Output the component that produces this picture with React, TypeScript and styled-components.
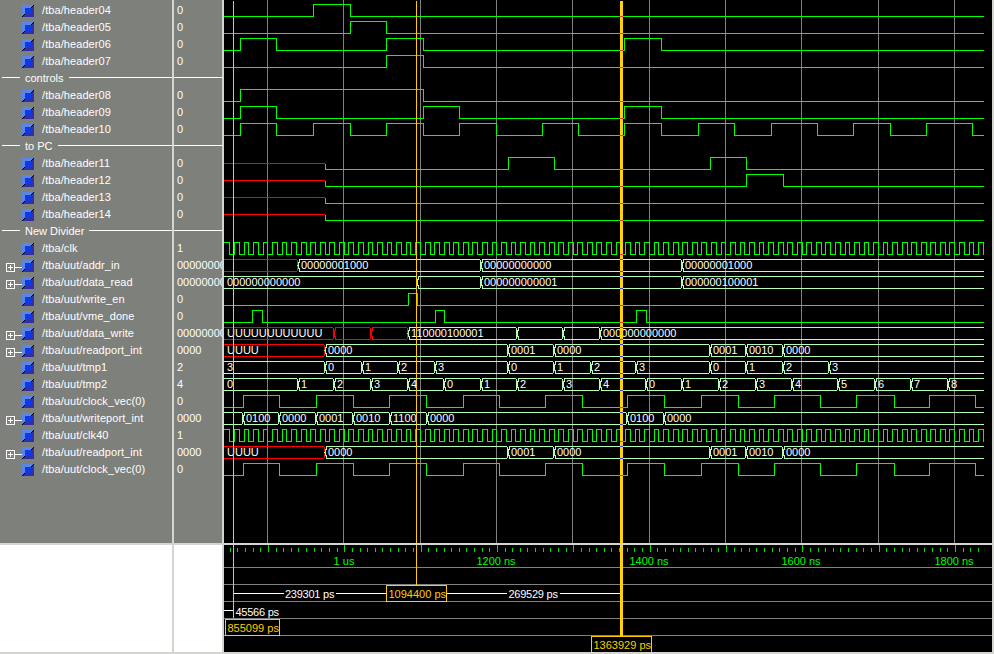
import { createGlobalStyle, styled } from 'styled-components';

const GlobalStyle = createGlobalStyle`
  html, body {
    margin: 0;
    padding: 0;
    background: #d4d4d0;
  }
  #root {
    width: 994px;
    height: 654px;
    overflow: hidden;
  }
`;

const FONT = `'Liberation Sans', Arial, sans-serif`;

const Window = styled.div`
  width: 994px;
  height: 654px;
  display: flex;
  flex-direction: column;
  background: #d4d4d0;
  font-family: ${FONT};
  font-size: 11px;
`;

const Pane = styled.div<{ $height: number }>`
  display: flex;
  height: ${(p) => p.$height}px;
  gap: 2px;
  padding-right: 2px;
`;

const LowerPane = styled(Pane)`
  margin-top: 2px;
`;

const Column = styled.div<{ $width: number; $blank?: boolean }>`
  width: ${(p) => p.$width}px;
  flex: none;
  padding-top: 2px;
  box-sizing: border-box;
  overflow: hidden;
  background: ${(p) => (p.$blank ? '#ffffff' : '#7e807c')};
  color: #ffffff;
`;

const Row = styled.div`
  display: flex;
  align-items: center;
  height: 17px;
  white-space: nowrap;
`;

const NameRow = styled(Row)`
  padding-left: 6px;
`;

const Expander = styled.span`
  position: relative;
  flex: none;
  box-sizing: border-box;
  width: 9px;
  height: 9px;
  margin-top: 4px;
  margin-right: 7px;
  border: 1px solid #ffffff;
  display: flex;
  align-items: center;
  justify-content: center;

  &::before {
    content: '';
    width: 5px;
    height: 1px;
    background: #ffffff;
  }
  &::after {
    content: '';
    position: absolute;
    left: 3px;
    top: 1px;
    width: 1px;
    height: 5px;
    background: #ffffff;
  }
`;

const Connector = styled.span`
  position: absolute;
  left: 8px;
  top: 3px;
  width: 7px;
  height: 1px;
  background: #ffffff;
`;

const NoExpander = styled.span`
  flex: none;
  width: 16px;
`;

const Name = styled.span`
  margin-left: 8px;
  margin-bottom: 2px;
  letter-spacing: 0.08px;
`;

const Value = styled(Row)`
  padding-left: 3px;
  padding-bottom: 2px;
  box-sizing: border-box;
`;

const DividerRow = styled(Row)`
  gap: 5px;
  padding-left: 2px;
  padding-bottom: 2px;
  box-sizing: border-box;
`;

const Rule = styled.span<{ $width?: number }>`
  height: 1px;
  background: #ffffff;
  flex: ${(p) => (p.$width ? `0 0 ${p.$width}px` : '1')};
`;

const DividerLine = styled(Row)`
  padding-bottom: 2px;
  box-sizing: border-box;
`;

const IconSvg = styled.svg`
  flex: none;
  width: 12px;
  height: 12px;
  margin-top: 1px;
  shape-rendering: crispEdges;
`;

const WaveArea = styled.svg`
  display: block;
  width: 768px;
  flex: none;
  background: #000000;
  shape-rendering: crispEdges;

  text {
    font-family: ${FONT};
    font-size: 11px;
  }
`;

const DeltaLabel = styled.text`
  fill: #ffffff;
  letter-spacing: -0.25px;
`;

type Signal =
  | { kind: 'divider'; label: string }
  | { kind: 'signal'; name: string; value: string; bus?: boolean };

const signals: Signal[] = [
  { kind: 'signal', name: '/tba/header04', value: '0' },
  { kind: 'signal', name: '/tba/header05', value: '0' },
  { kind: 'signal', name: '/tba/header06', value: '0' },
  { kind: 'signal', name: '/tba/header07', value: '0' },
  { kind: 'divider', label: 'controls' },
  { kind: 'signal', name: '/tba/header08', value: '0' },
  { kind: 'signal', name: '/tba/header09', value: '0' },
  { kind: 'signal', name: '/tba/header10', value: '0' },
  { kind: 'divider', label: 'to PC' },
  { kind: 'signal', name: '/tba/header11', value: '0' },
  { kind: 'signal', name: '/tba/header12', value: '0' },
  { kind: 'signal', name: '/tba/header13', value: '0' },
  { kind: 'signal', name: '/tba/header14', value: '0' },
  { kind: 'divider', label: 'New Divider' },
  { kind: 'signal', name: '/tba/clk', value: '1' },
  { kind: 'signal', name: '/tba/uut/addr_in', value: '00000000', bus: true },
  { kind: 'signal', name: '/tba/uut/data_read', value: '00000000', bus: true },
  { kind: 'signal', name: '/tba/uut/write_en', value: '0' },
  { kind: 'signal', name: '/tba/uut/vme_done', value: '0' },
  { kind: 'signal', name: '/tba/uut/data_write', value: '00000000', bus: true },
  { kind: 'signal', name: '/tba/uut/readport_int', value: '0000', bus: true },
  { kind: 'signal', name: '/tba/uut/tmp1', value: '2' },
  { kind: 'signal', name: '/tba/uut/tmp2', value: '4' },
  { kind: 'signal', name: '/tba/uut/clock_vec(0)', value: '0' },
  { kind: 'signal', name: '/tba/uut/writeport_int', value: '0000', bus: true },
  { kind: 'signal', name: '/tba/uut/clk40', value: '1' },
  { kind: 'signal', name: '/tba/uut/readport_int', value: '0000', bus: true },
  { kind: 'signal', name: '/tba/uut/clock_vec(0)', value: '0' },
];

// everything below is in window x, the wave pane starts at 224
const X0 = 224;
const XEND = 984;
const GREEN = '#00ff00';
const PALE = '#b4ffb4';
const RED = '#ff0000';
const GRID = '#808080';
const CURSOR = '#ffcc00';
const CURSOR_THICK = '#ffd400';

const gridXs = Array.from({ length: 10 }, (_, k) => Math.round(267 + 76.33 * k));

const clockEdges: number[] = [];
for (let x = 229.2; x < XEND; x += 4.77) clockEdges.push(x);

const slowClock = [243, 279, 316, 353, 389, 426, 463, 499, 545, 582, 627, 664, 701, 738, 774, 820, 856, 894, 929, 975];

type Wire = { row: number; edges: number[]; startHigh?: boolean; unknownUntil?: number };

const wires: Wire[] = [
  { row: 0, edges: [313, 350] },
  { row: 1, edges: [350, 386] },
  { row: 2, edges: [240, 276, 386, 423, 624, 661] },
  { row: 3, edges: [386, 423] },
  { row: 5, edges: [240, 423] },
  { row: 6, edges: [240, 276, 423, 459, 624, 661] },
  { row: 7, edges: [240, 276, 313, 350, 386, 423, 459, 496, 542, 578, 624, 661, 698, 734, 771, 817, 853, 890, 926, 972] },
  { row: 9, edges: [508, 554, 710, 746], unknownUntil: 325 },
  { row: 10, edges: [746, 783], unknownUntil: 325 },
  { row: 11, edges: [], unknownUntil: 325 },
  { row: 12, edges: [], unknownUntil: 325 },
  { row: 14, edges: clockEdges, startHigh: true },
  { row: 17, edges: [408, 417] },
  { row: 18, edges: [252, 262, 435, 444, 636, 646] },
  { row: 23, edges: slowClock },
  { row: 25, edges: clockEdges, startHigh: true },
  { row: 27, edges: slowClock },
];

type Segment = { at: number; text?: string; red?: boolean };
type Bus = { row: number; segments: Segment[] };

const readport: Segment[] = [
  { at: X0, text: 'UUUU', red: true },
  { at: 325, text: '0000' },
  { at: 508, text: '0001' },
  { at: 554, text: '0000' },
  { at: 710, text: '0001' },
  { at: 746, text: '0010' },
  { at: 783, text: '0000' },
];

const buses: Bus[] = [
  {
    row: 15,
    segments: [
      { at: X0, red: true },
      { at: 298, text: '00000001000' },
      { at: 481, text: '00000000000' },
      { at: 682, text: '00000001000' },
    ],
  },
  {
    row: 16,
    segments: [
      { at: X0, text: '000000000000' },
      { at: 417 },
      { at: 481, text: '000000000001' },
      { at: 682, text: '000000100001' },
    ],
  },
  {
    row: 19,
    segments: [
      { at: X0, text: 'UUUUUUUUUUUU', red: true },
      { at: 334, red: true },
      { at: 371, red: true },
      { at: 408, text: '110000100001' },
      { at: 517 },
      { at: 563 },
      { at: 600, text: '000000000000' },
    ],
  },
  { row: 20, segments: readport },
  {
    row: 21,
    segments: [
      { at: X0, text: '3' },
      { at: 325, text: '0' },
      { at: 362, text: '1' },
      { at: 398, text: '2' },
      { at: 435, text: '3' },
      { at: 508, text: '0' },
      { at: 554, text: '1' },
      { at: 591, text: '2' },
      { at: 636, text: '3' },
      { at: 710, text: '0' },
      { at: 746, text: '1' },
      { at: 783, text: '2' },
      { at: 829, text: '3' },
    ],
  },
  {
    row: 22,
    segments: [
      { at: X0, text: '0' },
      { at: 298, text: '1' },
      { at: 334, text: '2' },
      { at: 371, text: '3' },
      { at: 408, text: '4' },
      { at: 444, text: '0' },
      { at: 481, text: '1' },
      { at: 517, text: '2' },
      { at: 563, text: '3' },
      { at: 600, text: '4' },
      { at: 646, text: '0' },
      { at: 682, text: '1' },
      { at: 719, text: '2' },
      { at: 756, text: '3' },
      { at: 792, text: '4' },
      { at: 838, text: '5' },
      { at: 875, text: '6' },
      { at: 911, text: '7' },
      { at: 948, text: '8' },
    ],
  },
  {
    row: 24,
    segments: [
      { at: X0 },
      { at: 243, text: '0100' },
      { at: 279, text: '0000' },
      { at: 316, text: '0001' },
      { at: 353, text: '0010' },
      { at: 390, text: '1100' },
      { at: 427, text: '0000' },
      { at: 627, text: '0100' },
      { at: 664, text: '0000' },
    ],
  },
  { row: 26, segments: readport },
];

const lowY = (row: number) => 16.5 + 17 * row;
const highY = (row: number) => 4.5 + 17 * row;
const midY = (row: number) => 10.5 + 17 * row;

function wirePath(w: Wire) {
  const low = lowY(w.row);
  const high = highY(w.row);
  let level = !!w.startHigh;
  const from = w.unknownUntil ?? X0;
  let d = w.unknownUntil
    ? `M${from + 0.5} ${midY(w.row)}V${low}`
    : `M${from} ${level ? high : low}`;
  for (const edge of w.edges) {
    const x = Math.round(edge) + 0.5;
    d += `H${x}V${level ? low : high}`;
    level = !level;
  }
  return `${d}H${XEND}`;
}

// level of a wire at a given x, for the xor marks where the cursor crosses
function wireYAt(w: Wire, x: number) {
  const flips = w.edges.filter((e) => e < x).length;
  const high = (flips % 2 === 1) !== !!w.startHigh;
  return high ? highY(w.row) : lowY(w.row);
}

function BusTrace({ bus }: { bus: Bus }) {
  const top = highY(bus.row);
  const bottom = lowY(bus.row);
  const mid = midY(bus.row);
  return (
    <g>
      {bus.segments.map((seg, i) => {
        const next = bus.segments[i + 1];
        const end = next ? next.at : XEND;
        const a = seg.at === X0 ? X0 : seg.at + 2;
        const b = next ? end - 1 : XEND;
        const color = seg.red ? RED : PALE;
        const left = seg.at === X0 ? '' : `M${a} ${top}L${seg.at} ${mid}L${a} ${bottom}`;
        const right = next ? `M${b} ${top}L${end} ${mid}L${b} ${bottom}` : '';
        return (
          <g key={seg.at}>
            <path d={`M${a} ${top}H${b}M${a} ${bottom}H${b}${left}${right}`} fill="none" stroke={color} />
            {seg.text && (
              <text x={seg.at === X0 ? X0 + 3 : seg.at + 3} y={top + 9.5} fill="#ffffff">
                {seg.text}
              </text>
            )}
          </g>
        );
      })}
    </g>
  );
}

function Waves() {
  const cursorMarks = wires.map((w) => wireYAt(w, 621));
  const busMarks = buses.flatMap((b) => [highY(b.row), lowY(b.row)]);
  return (
    <WaveArea viewBox={`${X0} 0 768 543`} height={543}>
      {gridXs.map((x) => (
        <line key={x} x1={x + 0.5} x2={x + 0.5} y1={0} y2={543} stroke={GRID} />
      ))}
      {wires.map((w) => (
        <g key={w.row}>
          {w.unknownUntil && (
            <line x1={X0} x2={w.unknownUntil} y1={midY(w.row)} y2={midY(w.row)} stroke={RED} />
          )}
          <path d={wirePath(w)} fill="none" stroke={GREEN} />
        </g>
      ))}
      {buses.map((b) => (
        <BusTrace key={b.row} bus={b} />
      ))}
      <line x1={233.5} x2={233.5} y1={1} y2={543} stroke={CURSOR} />
      <line x1={416.5} x2={416.5} y1={1} y2={543} stroke={CURSOR} />
      <rect x={620} y={1} width={3} height={542} fill={CURSOR_THICK} />
      {cursorMarks.map((y, i) => (
        <rect key={i} x={620} y={y - 0.5} width={3} height={1} fill="#ff3030" />
      ))}
      {busMarks.map((y) => (
        <rect key={y} x={620} y={y - 0.5} width={3} height={1} fill="#4040e0" />
      ))}
    </WaveArea>
  );
}

const ticks = Array.from({ length: 99 }, (_, k) => 229.8 + 7.633 * k).filter((x) => x < 992);
const scaleLabels = [
  { x: 344, text: '1 us' },
  { x: 496, text: '1200 ns' },
  { x: 649, text: '1400 ns' },
  { x: 801, text: '1600 ns' },
  { x: 954, text: '1800 ns' },
];
const cursorRows = [567, 584, 601, 618, 635];

function CursorBox({ x, y, width, label }: { x: number; y: number; width: number; label: string }) {
  return (
    <g>
      <rect x={x + 0.5} y={y + 0.5} width={width} height={16} fill="#000000" stroke={CURSOR} />
      <text x={x + 2.5} y={y + 13} fill={CURSOR}>
        {label}
      </text>
    </g>
  );
}

function Ruler() {
  return (
    <WaveArea viewBox={`${X0} 545 768 107`} height={107}>
      {ticks.map((x, k) => {
        const major = k % 10 === 5;
        return (
          <line
            key={k}
            x1={Math.round(x) + 0.5}
            x2={Math.round(x) + 0.5}
            y1={major ? 545 : 548}
            y2={552}
            stroke="#00e000"
          />
        );
      })}
      {scaleLabels.map((l) => (
        <text key={l.x} x={l.x} y={565} textAnchor="middle" fill={GREEN}>
          {l.text}
        </text>
      ))}
      {cursorRows.map((y) => (
        <line key={y} x1={X0} x2={992} y1={y + 0.5} y2={y + 0.5} stroke={GRID} />
      ))}
      <line x1={233.5} x2={233.5} y1={545} y2={618} stroke={CURSOR} />
      <line x1={416.5} x2={416.5} y1={545} y2={585} stroke={CURSOR} />
      <rect x={620} y={545} width={3} height={91} fill={CURSOR_THICK} />

      <path d="M234 593.5H284M336 593.5H386M447 593.5H507M560 593.5H620M224 610.5H233" stroke="#ffffff" />
      <DeltaLabel x={285} y={598}>239301 ps</DeltaLabel>
      <DeltaLabel x={508.5} y={598}>269529 ps</DeltaLabel>
      <DeltaLabel x={235.5} y={615.5}>45566 ps</DeltaLabel>

      <CursorBox x={386} y={585} width={60} label="1094400 ps" />
      <CursorBox x={225} y={619} width={54} label="855099 ps" />
      <CursorBox x={591} y={636} width={60} label="1363929 ps" />
    </WaveArea>
  );
}

function SignalIcon() {
  return (
    <IconSvg viewBox="0 0 12 12">
      <rect width="12" height="12" fill="#5a86e8" />
      <path d="M12 1V12H1V11H2V10H3V9H9V3H10V2H11V1Z" fill="#2f2fa6" />
      <rect x="3" y="3" width="6" height="6" fill="#1238e6" />
      <path d="M11 0H12V1H11V2H10V3H9V2H10V1H11ZM0 11H1V10H2V9H3V10H2V11H1V12H0Z" fill="#000000" />
    </IconSvg>
  );
}

export default function App() {
  return (
    <Window>
      <GlobalStyle />
      <Pane $height={543}>
        <Column $width={172}>
          {signals.map((s, i) =>
            s.kind === 'divider' ? (
              <DividerRow key={i}>
                <Rule $width={18} />
                <span>{s.label}</span>
                <Rule />
              </DividerRow>
            ) : (
              <NameRow key={i}>
                {s.bus ? (
                  <Expander>
                    <Connector />
                  </Expander>
                ) : (
                  <NoExpander />
                )}
                <SignalIcon />
                <Name>{s.name}</Name>
              </NameRow>
            ),
          )}
        </Column>
        <Column $width={48}>
          {signals.map((s, i) =>
            s.kind === 'divider' ? (
              <DividerLine key={i}>
                <Rule />
              </DividerLine>
            ) : (
              <Value key={i}>{s.value}</Value>
            ),
          )}
        </Column>
        <Waves />
      </Pane>
      <LowerPane $height={107}>
        <Column $width={172} $blank />
        <Column $width={48} $blank />
        <Ruler />
      </LowerPane>
    </Window>
  );
}
